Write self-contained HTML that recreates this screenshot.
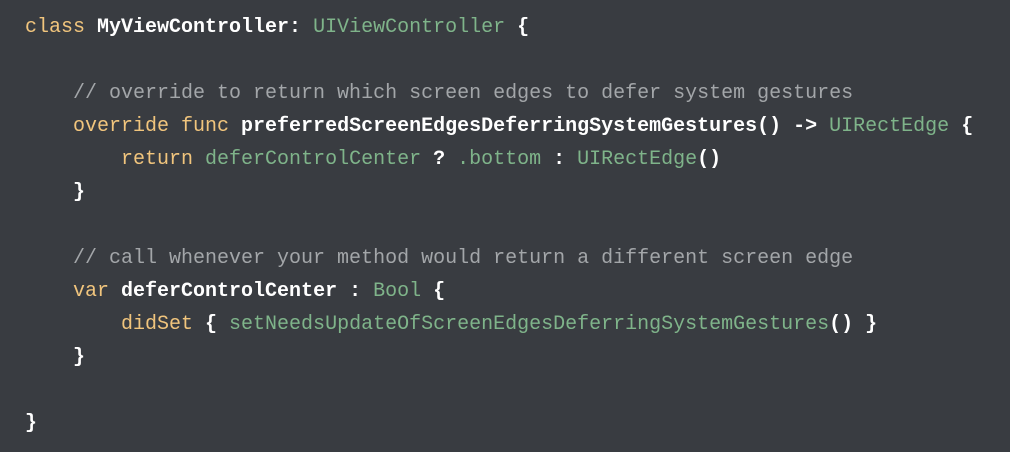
<!DOCTYPE html>
<html><head><meta charset="utf-8"><style>
html,body{margin:0;padding:0;}
body{width:1010px;height:452px;background:#393c41;overflow:hidden;}
pre{margin:0;position:absolute;left:25px;top:11px;font-family:"Liberation Mono",monospace;font-size:20px;line-height:33px;color:#fff;font-weight:bold;}
.k{color:#f1c57d;font-weight:normal;}
.g{color:#7fb48a;font-weight:normal;}
.c{color:#a3a6a9;font-weight:normal;}
</style></head><body><pre><span class="k">class</span> MyViewController: <span class="g">UIViewController</span> {

    <span class="c">// override to return which screen edges to defer system gestures</span>
    <span class="k">override func</span> preferredScreenEdgesDeferringSystemGestures() -&gt; <span class="g">UIRectEdge</span> {
        <span class="k">return</span> <span class="g">deferControlCenter</span> ? <span class="g">.bottom</span> : <span class="g">UIRectEdge</span>()
    }

    <span class="c">// call whenever your method would return a different screen edge</span>
    <span class="k">var</span> deferControlCenter : <span class="g">Bool</span> {
        <span class="k">didSet</span> { <span class="g">setNeedsUpdateOfScreenEdgesDeferringSystemGestures</span>() }
    }

}</pre></body></html>
